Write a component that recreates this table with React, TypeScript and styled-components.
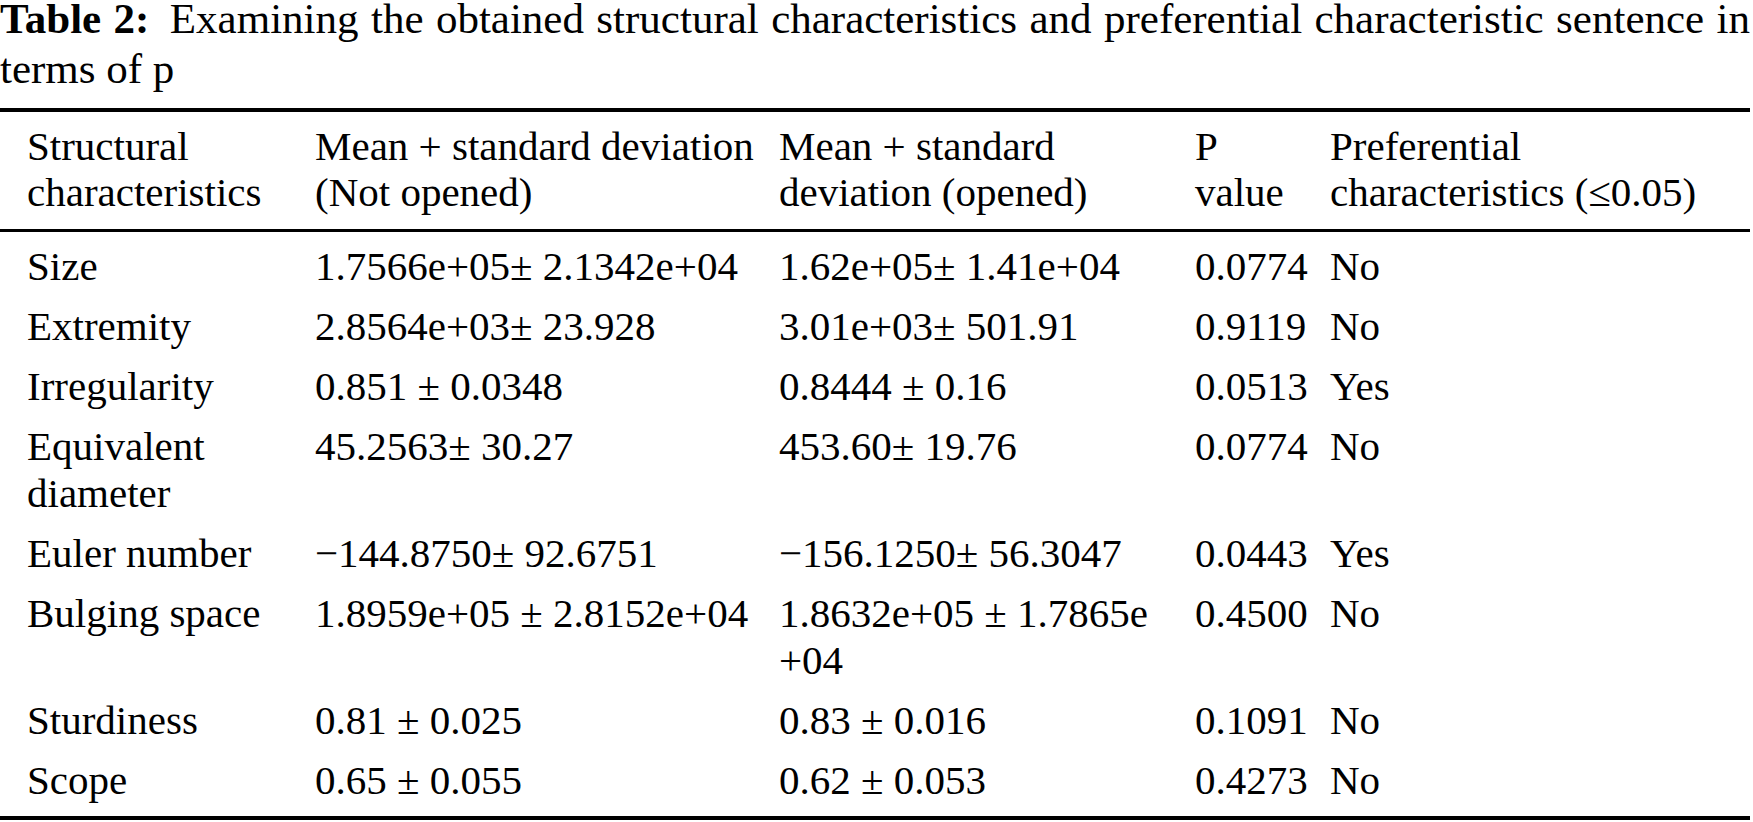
import React from 'react';
import styled, { createGlobalStyle } from 'styled-components';

const GlobalStyle = createGlobalStyle`
  html, body {
    margin: 0;
    padding: 0;
    background: #ffffff;
    overflow: hidden;
  }
  body {
    font-family: "Liberation Serif", "Times New Roman", serif;
    color: #000000;
  }
`;

const Page = styled.div`
  width: 1750px;
`;

const Caption = styled.p`
  margin: -6px 0 14px;
  font-size: 43px;
  line-height: 50px;
  text-align: justify;

  b {
    font-weight: 700;
    margin-right: 8px;
  }
`;

const Table = styled.div`
  font-size: 41px;
  border-top: 4px solid #000;
  border-bottom: 4px solid #000;
`;

const Head = styled.div`
  display: grid;
  grid-template-columns: 288px 464px 416px 135px 1fr;
  padding: 11px 0 14px 27px;
  line-height: 46px;
  border-bottom: 3px solid #000;
`;

const Row = styled.div`
  display: grid;
  grid-template-columns: 288px 464px 416px 135px 1fr;
  padding: 7px 0 6px 27px;
  line-height: 47px;

  &:nth-child(2) {
    padding-top: 11px;
  }

  &:last-child {
    padding-bottom: 12px;
  }
`;

const Cell = styled.div`
  padding-right: 16px;
`;

const headers = [
  'Structural characteristics',
  'Mean + standard deviation (Not opened)',
  'Mean + standard deviation (opened)',
  'P value',
  'Preferential characteristics (≤0.05)',
];

const rows: string[][] = [
  ['Size', '1.7566e+05± 2.1342e+04', '1.62e+05± 1.41e+04', '0.0774', 'No'],
  ['Extremity', '2.8564e+03± 23.928', '3.01e+03± 501.91', '0.9119', 'No'],
  ['Irregularity', '0.851 ± 0.0348', '0.8444 ± 0.16', '0.0513', 'Yes'],
  ['Equivalent diameter', '45.2563± 30.27', '453.60± 19.76', '0.0774', 'No'],
  ['Euler number', '−144.8750± 92.6751', '−156.1250± 56.3047', '0.0443', 'Yes'],
  ['Bulging space', '1.8959e+05 ± 2.8152e+04', '1.8632e+05 ± 1.7865e +04', '0.4500', 'No'],
  ['Sturdiness', '0.81 ± 0.025', '0.83 ± 0.016', '0.1091', 'No'],
  ['Scope', '0.65 ± 0.055', '0.62 ± 0.053', '0.4273', 'No'],
];

const App: React.FC = () => {
  return (
    <>
      <GlobalStyle />
      <Page>
        <Caption>
          <b>Table 2:</b> Examining the obtained structural characteristics and preferential
          characteristic sentence in terms of p
        </Caption>
        <Table>
          <Head>
            {headers.map((h, i) => (
              <Cell key={i}>{h}</Cell>
            ))}
          </Head>
          {rows.map((r, i) => (
            <Row key={i}>
              {r.map((c, j) => (
                <Cell key={j}>{c}</Cell>
              ))}
            </Row>
          ))}
        </Table>
      </Page>
    </>
  );
};

export default App;
